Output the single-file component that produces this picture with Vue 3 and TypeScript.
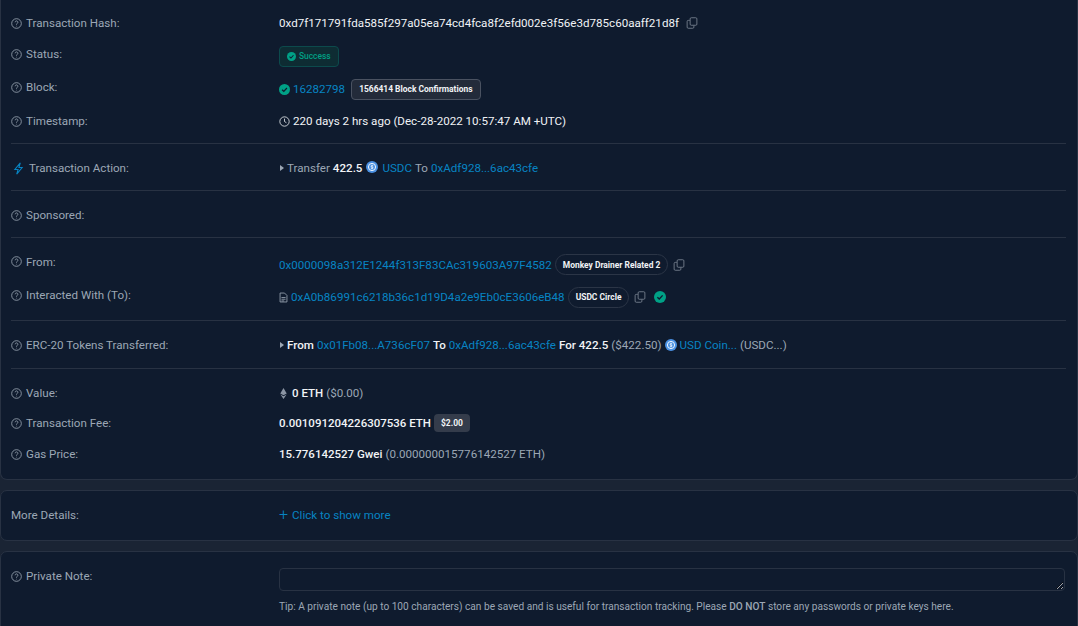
<script setup lang="ts">
const helpCircle = 'M8 1a7 7 0 1 0 0 14A7 7 0 0 0 8 1z'
const helpMark = 'M6 6.2a2 2 0 1 1 3 1.8c-.7.4-1 .8-1 1.6M8 11.4v.8'
</script>

<template>
  <div class="page">
    <section class="card card--main">
      <div class="group group--top">
        <div class="row row--hash">
          <div class="label"><svg class="help" viewBox="0 0 16 16"><path :d="helpCircle" /><path :d="helpMark" /></svg>Transaction Hash:</div>
          <div class="value white">
            0xd7f171791fda585f297a05ea74cd4fca8f2efd002e3f56e3d785c60aaff21d8f
            <svg class="copy copy--hash" viewBox="0 0 16 16"><rect x="5.5" y="1" width="9" height="10" rx="1.5" /><path d="M5 4.5H3A1.5 1.5 0 0 0 1.5 6v7.5A1.5 1.5 0 0 0 3 15h6a1.5 1.5 0 0 0 1.5-1.5v-2" /></svg>
          </div>
        </div>
        <div class="row row--status">
          <div class="label"><svg class="help" viewBox="0 0 16 16"><path :d="helpCircle" /><path :d="helpMark" /></svg>Status:</div>
          <div class="value">
            <span class="status-badge">
              <svg class="tick tick--small" viewBox="0 0 16 16"><circle cx="8" cy="8" r="8" /><path d="M4.5 8.3 7 10.7l4.5-4.900" /></svg>
              Success
            </span>
          </div>
        </div>
        <div class="row row--block">
          <div class="label"><svg class="help" viewBox="0 0 16 16"><path :d="helpCircle" /><path :d="helpMark" /></svg>Block:</div>
          <div class="value">
            <svg class="tick tick--block" viewBox="0 0 16 16"><circle cx="8" cy="8" r="8" /><path d="M4.5 8.3 7 10.7l4.5-4.900" /></svg>
            <a class="link">16282798</a>
            <span class="confirm-badge">1566414 Block Confirmations</span>
          </div>
        </div>
        <div class="row row--time">
          <div class="label"><svg class="help" viewBox="0 0 16 16"><path :d="helpCircle" /><path :d="helpMark" /></svg>Timestamp:</div>
          <div class="value white">
            <svg class="clock" viewBox="0 0 16 16"><circle cx="8" cy="8" r="6.8" /><path d="M8 3.8V8l2.800 1.800" /></svg>
            220 days 2 hrs ago (Dec-28-2022 10:57:47 AM +UTC)
          </div>
        </div>
      </div>

      <div class="group group--single">
        <div class="row">
          <div class="label label--action"><svg class="bolt" viewBox="0 0 16 16"><path d="M10.2 1 3.5 9.2h4L5.8 15l6.700-8.200h-4z" /></svg>Transaction Action:</div>
          <div class="value">
            <span class="caret"></span>
            <span class="muted">Transfer</span>
            <b class="white">422.5</b>
            <svg class="coin coin--action" viewBox="0 0 16 16"><circle cx="8" cy="8" r="8" fill="#4a90e2" /><circle cx="8" cy="8" r="4.8" fill="none" stroke="#fff" stroke-width="1.2" /><path d="M8 5v6M9.500 6.500C8.700 5.900 6.700 6 6.700 7.100c0 1.500 2.800.7 2.800 2 0 1-2 1.100-2.900.5" fill="none" stroke="#fff" stroke-width=".9" /></svg>
            <a class="link">USDC</a>
            <span class="muted">To</span>
            <a class="link">0xAdf928...6ac43cfe</a>
          </div>
        </div>
      </div>

      <div class="group group--single">
        <div class="row">
          <div class="label"><svg class="help" viewBox="0 0 16 16"><path :d="helpCircle" /><path :d="helpMark" /></svg>Sponsored:</div>
          <div class="value"></div>
        </div>
      </div>

      <div class="group group--parties">
        <div class="row row--from">
          <div class="label"><svg class="help" viewBox="0 0 16 16"><path :d="helpCircle" /><path :d="helpMark" /></svg>From:</div>
          <div class="value">
            <a class="link">0x0000098a312E1244f313F83CAc319603A97F4582</a>
            <span class="name-tag">Monkey Drainer Related 2</span>
            <svg class="copy" viewBox="0 0 16 16"><rect x="5.5" y="1" width="9" height="10" rx="1.5" /><path d="M5 4.5H3A1.5 1.5 0 0 0 1.5 6v7.5A1.5 1.5 0 0 0 3 15h6a1.5 1.5 0 0 0 1.5-1.5v-2" /></svg>
          </div>
        </div>
        <div class="row row--to">
          <div class="label"><svg class="help" viewBox="0 0 16 16"><path :d="helpCircle" /><path :d="helpMark" /></svg>Interacted With (To):</div>
          <div class="value">
            <svg class="file" viewBox="0 0 12 16"><path d="M1 1.5h6.500L11 5v9.500H1zM3 8h6M3 10.500h6M3 13h4" /></svg>
            <a class="link">0xA0b86991c6218b36c1d19D4a2e9Eb0cE3606eB48</a>
            <span class="name-tag">USDC Circle</span>
            <svg class="copy" viewBox="0 0 16 16"><rect x="5.5" y="1" width="9" height="10" rx="1.5" /><path d="M5 4.5H3A1.5 1.5 0 0 0 1.5 6v7.5A1.5 1.5 0 0 0 3 15h6a1.5 1.5 0 0 0 1.5-1.5v-2" /></svg>
            <svg class="tick tick--verified" viewBox="0 0 16 16"><circle cx="8" cy="8" r="8" /><path d="M4.5 8.3 7 10.7l4.5-4.900" /></svg>
          </div>
        </div>
      </div>

      <div class="group group--tokens">
        <div class="row">
          <div class="label"><svg class="help" viewBox="0 0 16 16"><path :d="helpCircle" /><path :d="helpMark" /></svg>ERC-20 Tokens Transferred:</div>
          <div class="value">
            <span class="caret"></span>
            <b class="white">From</b>
            <a class="link">0x01Fb08...A736cF07</a>
            <b class="white">To</b>
            <a class="link">0xAdf928...6ac43cfe</a>
            <b class="white">For 422.5</b>
            <span class="muted">($422.50)</span>
            <svg class="coin" viewBox="0 0 16 16"><circle cx="8" cy="8" r="8" fill="#4a90e2" /><circle cx="8" cy="8" r="4.8" fill="none" stroke="#fff" stroke-width="1.2" /><path d="M8 5v6M9.500 6.500C8.700 5.900 6.700 6 6.700 7.100c0 1.500 2.800.7 2.800 2 0 1-2 1.100-2.900.5" fill="none" stroke="#fff" stroke-width=".9" /></svg>
            <a class="link">USD Coin...</a>
            <span class="muted">(USDC...)</span>
          </div>
        </div>
      </div>

      <div class="group group--fees">
        <div class="row row--eth">
          <div class="label"><svg class="help" viewBox="0 0 16 16"><path :d="helpCircle" /><path :d="helpMark" /></svg>Value:</div>
          <div class="value">
            <svg class="eth" viewBox="0 0 10 16"><path d="M5 0 .3 8 5 10.700 9.700 8z" /><path d="M.5 9.300 5 16l4.500-6.700L5 12z" /></svg>
            <span class="white strong">0 ETH</span>
            <span class="muted">($0.00)</span>
          </div>
        </div>
        <div class="row row--fee">
          <div class="label"><svg class="help" viewBox="0 0 16 16"><path :d="helpCircle" /><path :d="helpMark" /></svg>Transaction Fee:</div>
          <div class="value">
            <span class="white strong">0.001091204226307536 ETH</span>
            <span class="price-badge">$2.00</span>
          </div>
        </div>
        <div class="row row--gas">
          <div class="label"><svg class="help" viewBox="0 0 16 16"><path :d="helpCircle" /><path :d="helpMark" /></svg>Gas Price:</div>
          <div class="value">
            <span class="white strong">15.776142527 Gwei</span>
            <span class="muted">(0.000000015776142527 ETH)</span>
          </div>
        </div>
      </div>
    </section>

    <section class="card card--more">
      <div class="row">
        <div class="label">More Details:</div>
        <a class="link show-more"><span class="plus">+</span>Click to show more</a>
      </div>
    </section>

    <section class="card card--note">
      <div class="note-grid">
        <div class="label"><svg class="help" viewBox="0 0 16 16"><path :d="helpCircle" /><path :d="helpMark" /></svg>Private Note:</div>
        <div>
          <textarea class="note-input" aria-label="Private note"></textarea>
          <p class="tip">Tip: A private note (up to 100 characters) can be saved and is useful for transaction tracking. Please <b>DO NOT</b> store any passwords or private keys here.</p>
        </div>
      </div>
    </section>
  </div>
</template>

<style scoped>
.page {
  width: 1078px;
  height: 626px;
  overflow: hidden;
  background: #1a2434;
  font-family: Roboto, "Liberation Sans", sans-serif;
  font-size: 11.6px;
  color: #9ca7b5;
  display: flex;
  flex-direction: column;
  gap: 10px;
}

.card {
  background: #0f1b2e;
  border: 1px solid #283243;
  border-radius: 7px;
  box-sizing: border-box;
  padding: 0 11px 0 10px;
  flex: none;
}

.card--main {
  height: 480px;
  border-top: 0;
  border-top-left-radius: 0;
  border-top-right-radius: 0;
}

.card--more {
  height: 51px;
  padding-bottom: 2px;
  display: flex;
  align-items: center;
}

.card--note {
  height: 90px;
  padding-top: 16px;
}

.group {
  border-bottom: 1px solid #283243;
  display: flex;
  flex-direction: column;
  box-sizing: border-box;
}

.group--top { height: 144px; padding-top: 13px; }
.group--single { height: 47px; justify-content: center; padding-top: 2px; }
.group--parties { height: 83px; padding-top: 10px; }
.group--tokens { height: 48px; justify-content: center; padding-top: 1px; }
.group--fees { border-bottom: 0; padding-top: 14px; }

.row {
  display: grid;
  grid-template-columns: 268px 1fr;
  align-items: center;
  min-height: 20px;
  width: 100%;
}

.row--hash { height: 20px; }
.row--status { height: 24px; margin-top: 11px; }
.row--status .label { margin-top: -4px; }
.row--block { height: 24px; margin-top: 9px; }
.row--block .label { margin-top: -4px; }
.row--time { height: 20px; margin-top: 10px; }
.row--from { height: 20px; }
.row--from .value { margin-top: 6px; }
.row--to { height: 24px; margin-top: 16px; }
.row--to .value { margin-top: 2px; }
.row--to .label { margin-top: -2px; }
.row--eth { height: 20px; }
.row--fee { height: 20px; margin-top: 10px; }
.row--gas { height: 20px; margin-top: 11px; }

.label {
  display: flex;
  align-items: center;
}

.label--action { padding-left: 1px; }

.help {
  width: 11px;
  height: 11px;
  margin-right: 4px;
  fill: none;
  stroke: #9ca7b5;
  stroke-width: 1.2;
  flex: none;
}

.bolt {
  width: 13px;
  height: 13px;
  margin-right: 4px;
  fill: none;
  stroke: #0784c3;
  stroke-width: 1.3;
  flex: none;
}

.value {
  display: flex;
  align-items: center;
  gap: 3px;
  white-space: nowrap;
  min-width: 0;
}

.white { color: #f1f3f6; }
.muted { color: #9ca7b5; }
.strong { font-weight: 500; font-size: 11.5px; }
b { font-weight: 500; }

.link {
  color: #0784c3;
  text-decoration: none;
}

.copy {
  width: 12px;
  height: 12px;
  margin-left: 2px;
  fill: none;
  stroke: #7e8896;
  stroke-width: 1.1;
  flex: none;
}

.copy--hash { margin-left: 4px; }

.status-badge {
  display: inline-flex;
  align-items: center;
  gap: 3px;
  height: 21px;
  box-sizing: border-box;
  padding: 0 7px;
  border: 1px solid #0c4a4c;
  border-radius: 4px;
  background: #0e2c33;
  color: #00a186;
  font-size: 8.4px;
  font-weight: 500;
}

.tick circle { fill: #00a186; }
.tick path {
  fill: none;
  stroke: #0f1b2e;
  stroke-width: 1.8;
}

.tick--small { width: 9px; height: 9px; }
.tick--block { width: 11px; height: 11px; }
.tick--verified { width: 12px; height: 12px; margin-left: 5px; }

.confirm-badge {
  display: inline-flex;
  align-items: center;
  height: 21px;
  box-sizing: border-box;
  padding: 0 7px;
  margin-left: 3px;
  border: 1px solid #4a5261;
  border-radius: 4px;
  background: #232b3a;
  color: #f1f3f6;
  font-size: 8.45px;
  font-weight: 700;
}

.clock {
  width: 11px;
  height: 11px;
  fill: none;
  stroke: #e8ebef;
  stroke-width: 1.2;
  flex: none;
}

.caret {
  width: 0;
  height: 0;
  border-left: 4px solid #9ca7b5;
  border-top: 3.5px solid transparent;
  border-bottom: 3.5px solid transparent;
  margin-left: 1px;
}

.coin { width: 12px; height: 12px; flex: none; }
.coin--action { margin-top: -3px; margin-left: 1px; margin-right: 1px; }

.name-tag {
  display: inline-flex;
  align-items: center;
  height: 21px;
  box-sizing: border-box;
  padding: 0 7px;
  border: 1px solid #2b3546;
  border-radius: 11px;
  color: #f1f3f6;
  font-size: 8.45px;
  font-weight: 700;
}

.file {
  width: 9px;
  height: 11px;
  fill: none;
  stroke: #9ca7b5;
  stroke-width: 1.2;
  flex: none;
}

.eth {
  width: 7px;
  height: 11px;
  fill: #8a94a3;
  flex: none;
  margin-left: 1px;
  margin-right: 2px;
}

.price-badge {
  display: inline-flex;
  align-items: center;
  height: 18px;
  padding: 0 7px;
  border-radius: 4px;
  background: #343c4b;
  color: #f1f3f6;
  font-size: 8.45px;
  font-weight: 700;
}

.show-more {
  display: inline-flex;
  align-items: center;
}

.plus {
  font-size: 16px;
  font-weight: 300;
  line-height: 1;
  margin-right: 4px;
}

.note-grid {
  display: grid;
  grid-template-columns: 268px 1fr;
}

.note-grid .label { align-self: start; height: 16px; }

.note-input {
  display: block;
  width: 786px;
  height: 23px;
  box-sizing: border-box;
  background: #0f1b2e;
  border: 1px solid #283243;
  border-radius: 4px;
  outline: none;
}

.tip {
  margin: 9px 0 0;
  font-size: 10.14px;
  line-height: 14px;
  color: #9ca7b5;
}
</style>
